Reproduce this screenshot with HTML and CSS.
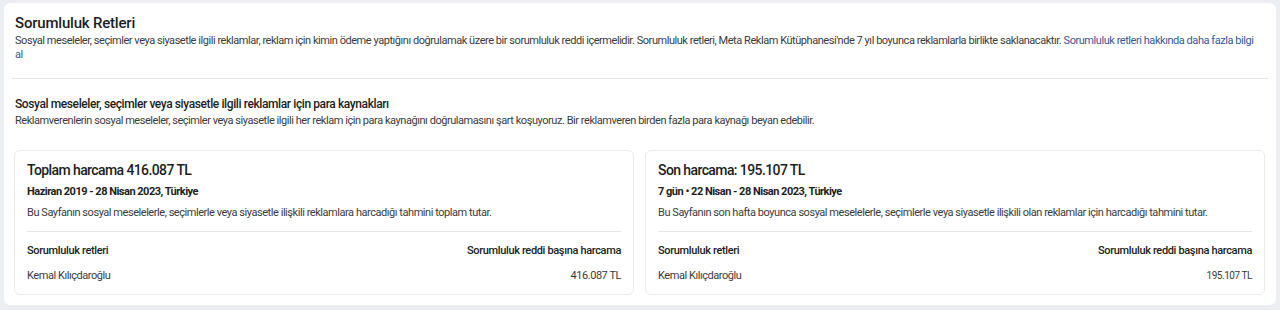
FILE: index.html
```html
<!DOCTYPE html>
<html lang="tr">
<head>
    <meta charset="UTF-8">
    <meta name="viewport" content="width=device-width, initial-scale=1.0">
    <title>Sorumluluk Retleri</title>
    <link rel="stylesheet" href="styles.css">
</head>
<body>
    <div class="panel">
        <h1>Sorumluluk Retleri</h1>
        <p class="intro">Sosyal meseleler, seçimler veya siyasetle ilgili reklamlar, reklam için kimin ödeme yaptığını doğrulamak üzere bir sorumluluk reddi içermelidir. Sorumluluk retleri, Meta Reklam Kütüphanesi'nde 7 yıl boyunca reklamlarla birlikte saklanacaktır. <a href="#">Sorumluluk retleri hakkında daha fazla bilgi al</a></p>

        <hr class="divider">

        <h2>Sosyal meseleler, seçimler veya siyasetle ilgili reklamlar için para kaynakları</h2>
        <p class="intro">Reklamverenlerin sosyal meseleler, seçimler veya siyasetle ilgili her reklam için para kaynağını doğrulamasını şart koşuyoruz. Bir reklamveren birden fazla para kaynağı beyan edebilir.</p>

        <div class="cards">
            <div class="card">
                <h3>Toplam harcama 416.087 TL</h3>
                <p class="period">Haziran 2019 - 28 Nisan 2023, Türkiye</p>
                <p class="note">Bu Sayfanın sosyal meselelerle, seçimlerle veya siyasetle ilişkili reklamlara harcadığı tahmini toplam tutar.</p>
                <div class="table">
                    <div class="row head">
                        <span>Sorumluluk retleri</span>
                        <span>Sorumluluk reddi başına harcama</span>
                    </div>
                    <div class="row">
                        <span>Kemal Kılıçdaroğlu</span>
                        <span>416.087 TL</span>
                    </div>
                </div>
            </div>
            <div class="card">
                <h3>Son harcama: 195.107 TL</h3>
                <p class="period">7 gün • 22 Nisan - 28 Nisan 2023, Türkiye</p>
                <p class="note">Bu Sayfanın son hafta boyunca sosyal meselelerle, seçimlerle veya siyasetle ilişkili olan reklamlar için harcadığı tahmini tutar.</p>
                <div class="table">
                    <div class="row head">
                        <span>Sorumluluk retleri</span>
                        <span>Sorumluluk reddi başına harcama</span>
                    </div>
                    <div class="row">
                        <span>Kemal Kılıçdaroğlu</span>
                        <span class="small">195.107 TL</span>
                    </div>
                </div>
            </div>
        </div>
    </div>
</body>
</html>
```

FILE: styles.css
```css
body {
    margin: 0;
    padding: 3px 4px;
    background-color: #eceef1;
    font-family: Roboto, "Noto Sans", Arial, sans-serif;
    color: #1c1e21;
}
.panel {
    background-color: white;
    border-radius: 7px;
    padding: 11px;
    box-sizing: border-box;
    height: 302px;
}
h1 {
    margin: 0;
    font-size: 15px;
    font-weight: 500;
    line-height: 18px;
    letter-spacing: -0.2px;
}
.intro {
    margin: 2px 0 0 0;
    padding-right: 9px;
    font-size: 11px;
    line-height: 14px;
    color: #3a3b3c;
    letter-spacing: -0.45px;
}
.intro a {
    color: #385898;
    text-decoration: none;
}
.divider {
    border: none;
    border-top: 1px solid #e4e6e9;
    margin: 16px -3px 17px -3px;
}
h2 {
    margin: 0;
    font-size: 12px;
    font-weight: 500;
    line-height: 16px;
    letter-spacing: -0.4px;
}
.cards {
    display: flex;
    gap: 11px;
    margin: 22px 0 0 -1px;
}
.card {
    flex: 1;
    border: 1px solid #eaebed;
    border-radius: 6px;
    padding: 10px 12px 11px 12px;
}
h3 {
    margin: 0;
    font-size: 14px;
    font-weight: 500;
    line-height: 18px;
    letter-spacing: -0.6px;
}
.period {
    margin: 6px 0 0 0;
    font-size: 11px;
    font-weight: 700;
    line-height: 14px;
    letter-spacing: -0.5px;
}
.note {
    margin: 7px 0 0 0;
    font-size: 11px;
    line-height: 14px;
    color: #3a3b3c;
    letter-spacing: -0.45px;
}
.table {
    margin-top: 11px;
    border-top: 1px solid #e4e6e9;
}
.row {
    display: flex;
    justify-content: space-between;
    font-size: 11px;
    line-height: 14px;
    color: #3a3b3c;
    letter-spacing: -0.45px;
    margin-top: 11px;
}
.head {
    font-weight: 500;
    color: #1c1e21;
    letter-spacing: -0.35px;
    margin-top: 12px;
}
.small {
    font-size: 10px;
}
```
